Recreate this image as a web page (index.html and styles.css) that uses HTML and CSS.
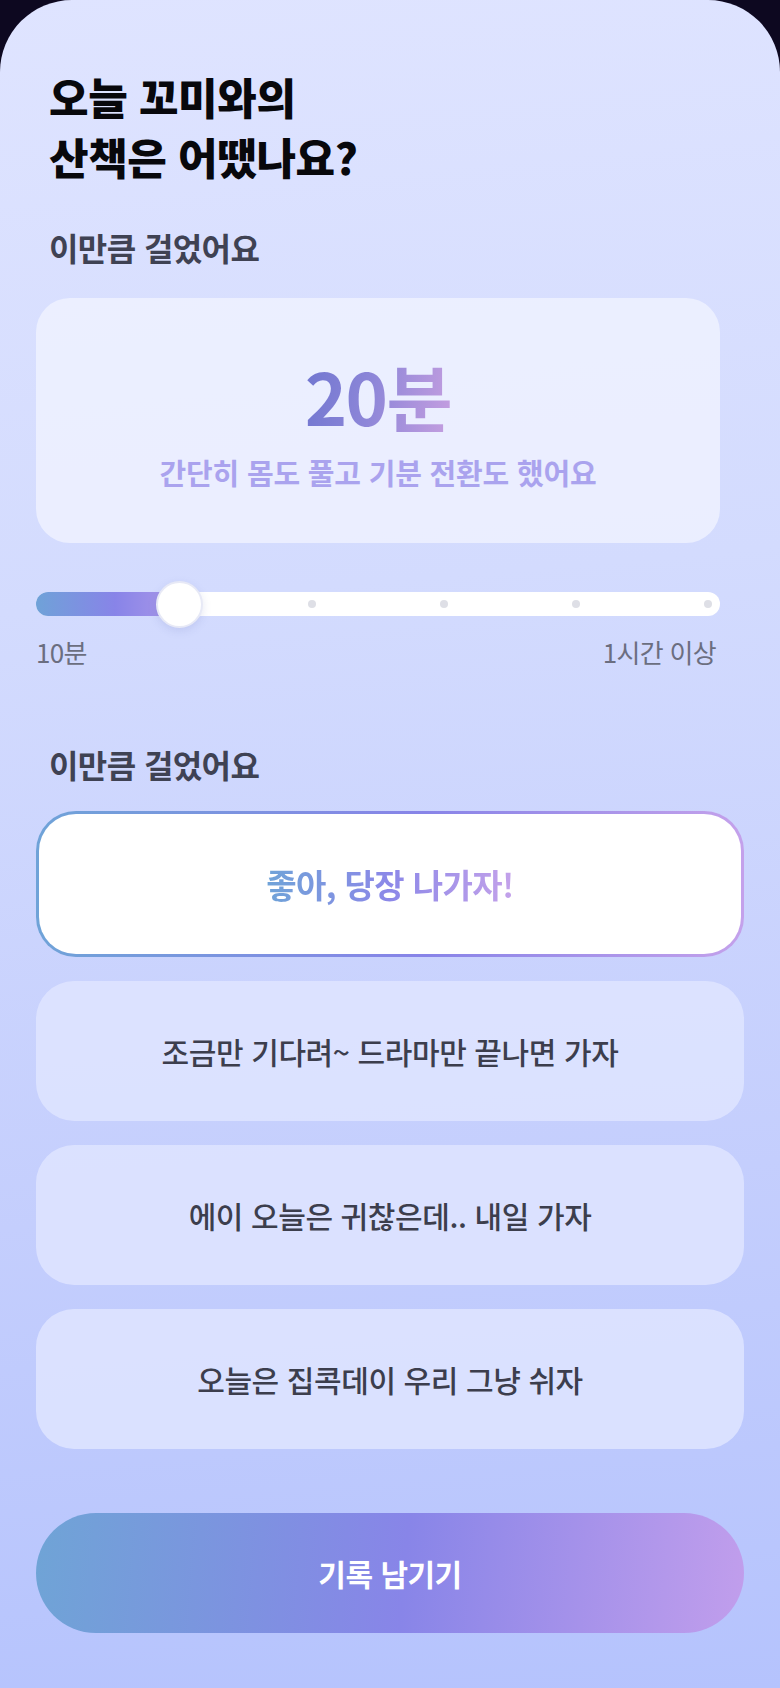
FILE: index.html
```html
<!DOCTYPE html>
<html lang="ko">
<head>
<meta charset="utf-8">
<title>산책 기록</title>
<link rel="stylesheet" href="styles.css">
</head>
<body>
<main class="screen">
  <h1 class="title">오늘 꼬미와의<br>산책은 어땠나요?</h1>

  <h2 class="section-label">이만큼 걸었어요</h2>
  <section class="duration-card">
    <p class="duration-value">20분</p>
    <p class="duration-desc">간단히 몸도 풀고 기분 전환도 했어요</p>
  </section>

  <div class="slider">
    <div class="track">
      <div class="fill" style="width: 144px"></div>
      <div class="dots">
        <span class="dot"></span><span class="dot"></span><span class="dot"></span>
        <span class="dot"></span><span class="dot"></span><span class="dot"></span>
      </div>
      <div class="thumb" style="left: 143px"></div>
    </div>
    <div class="slider-labels"><span>10분</span><span>1시간 이상</span></div>
  </div>

  <h2 class="section-label second">이만큼 걸었어요</h2>
  <div class="options">
    <button class="option selected"><span class="grad-text">좋아, 당장 나가자!</span></button>
    <button class="option">조금만 기다려~ 드라마만 끝나면 가자</button>
    <button class="option">에이 오늘은 귀찮은데.. 내일 가자</button>
    <button class="option">오늘은 집콕데이 우리 그냥 쉬자</button>
  </div>

  <button class="submit">기록 남기기</button>
</main>
</body>
</html>
```

FILE: styles.css
```css
* { box-sizing: border-box; }

html, body {
  margin: 0;
  padding: 0;
  background: #0d0820;
}

body {
  font-family: "Noto Sans CJK KR", "Noto Sans", sans-serif;
  width: 780px;
  min-height: 1688px;
}

.screen {
  min-height: 1688px;
  border-radius: 72px 72px 0 0;
  background: linear-gradient(175deg, #dfe4ff 0%, #d3dbfe 35%, #c4cefd 70%, #b5c3fd 100%);
  padding: 66px 36px 40px 36px;
  display: flex;
  flex-direction: column;
}

.title {
  margin: 0 0 0 13px;
  font-size: 43px;
  line-height: 60px;
  font-weight: 800;
  color: #08080c;
  letter-spacing: -0.4px;
}

.section-label {
  margin: 41px 0 0 13px;
  font-size: 32px;
  line-height: 40px;
  font-weight: 600;
  color: #3f4253;
  letter-spacing: -0.6px;
}

.section-label.second {
  margin-top: 76px;
}

.duration-card {
  margin: 31px 24px 0 0;
  height: 245px;
  border-radius: 34px;
  background: rgba(240, 243, 255, 0.8);
  display: flex;
  flex-direction: column;
  align-items: center;
  padding-top: 55px;
}

.duration-value {
  margin: 0;
  font-size: 72px;
  line-height: 84px;
  font-weight: 700;
  letter-spacing: -1.5px;
  background: linear-gradient(100deg, #7076d0 0%, #8d86d8 45%, #c69fe0 100%);
  -webkit-background-clip: text;
  background-clip: text;
  color: transparent;
}

.duration-desc {
  margin: 16px 0 0 0;
  font-size: 29px;
  line-height: 38px;
  font-weight: 700;
  color: #aaa3ee;
  letter-spacing: -0.2px;
}

.slider {
  margin: 49px 24px 0 0;
}

.track {
  position: relative;
  height: 24px;
  border-radius: 12px;
  background: #ffffff;
}

.fill {
  height: 24px;
  border-radius: 12px 0 0 12px;
  background: linear-gradient(90deg, #6fa2d8 0%, #8884e8 55%, #ab98e8 100%);
}

.dots {
  position: absolute;
  inset: 0;
  padding: 0 8px;
  display: flex;
  align-items: center;
  justify-content: space-between;
}

.dot {
  width: 8px;
  height: 8px;
  border-radius: 50%;
  background: #dedfe6;
}

.dot:first-child, .dot:nth-child(2) { visibility: hidden; }

.thumb {
  position: absolute;
  top: 50%;
  width: 47px;
  height: 47px;
  margin-left: -23.5px;
  margin-top: -23.5px;
  border-radius: 50%;
  background: #ffffff;
  border: 2px solid #e7e9f6;
  box-shadow: 0 3px 8px rgba(110, 120, 190, 0.18);
}

.slider-labels {
  margin-top: 20px;
  display: flex;
  justify-content: space-between;
  padding-right: 4px;
  font-size: 26px;
  line-height: 32px;
  color: #6b6e80;
  letter-spacing: -0.7px;
}

.options {
  margin-top: 27px;
  display: flex;
  flex-direction: column;
  gap: 24px;
}

.option {
  height: 140px;
  border: none;
  border-radius: 38px;
  background: rgba(222, 228, 255, 0.88);
  font-family: inherit;
  font-size: 30px;
  font-weight: 500;
  color: #3c3e4d;
  letter-spacing: -0.4px;
  display: flex;
  align-items: center;
  justify-content: center;
  padding: 0;
}

.option.selected {
  height: 146px;
  border: 3px solid transparent;
  border-radius: 40px;
  background:
    linear-gradient(#ffffff, #ffffff) padding-box,
    linear-gradient(90deg, #6fa3d8 0%, #8884e8 55%, #c4a1eb 100%) border-box;
}

.grad-text {
  font-size: 33px;
  font-weight: 700;
  letter-spacing: -0.6px;
  background: linear-gradient(90deg, #6fa3d8 0%, #8c88e8 50%, #c4a2ea 100%);
  -webkit-background-clip: text;
  background-clip: text;
  color: transparent;
}

.submit {
  margin-top: 64px;
  height: 120px;
  border: none;
  border-radius: 60px;
  background: linear-gradient(95deg, #6fa4d6 0%, #8885e8 52%, #c19eec 100%);
  font-family: inherit;
  font-size: 30px;
  font-weight: 700;
  color: #ffffff;
  letter-spacing: -0.5px;
}
```
